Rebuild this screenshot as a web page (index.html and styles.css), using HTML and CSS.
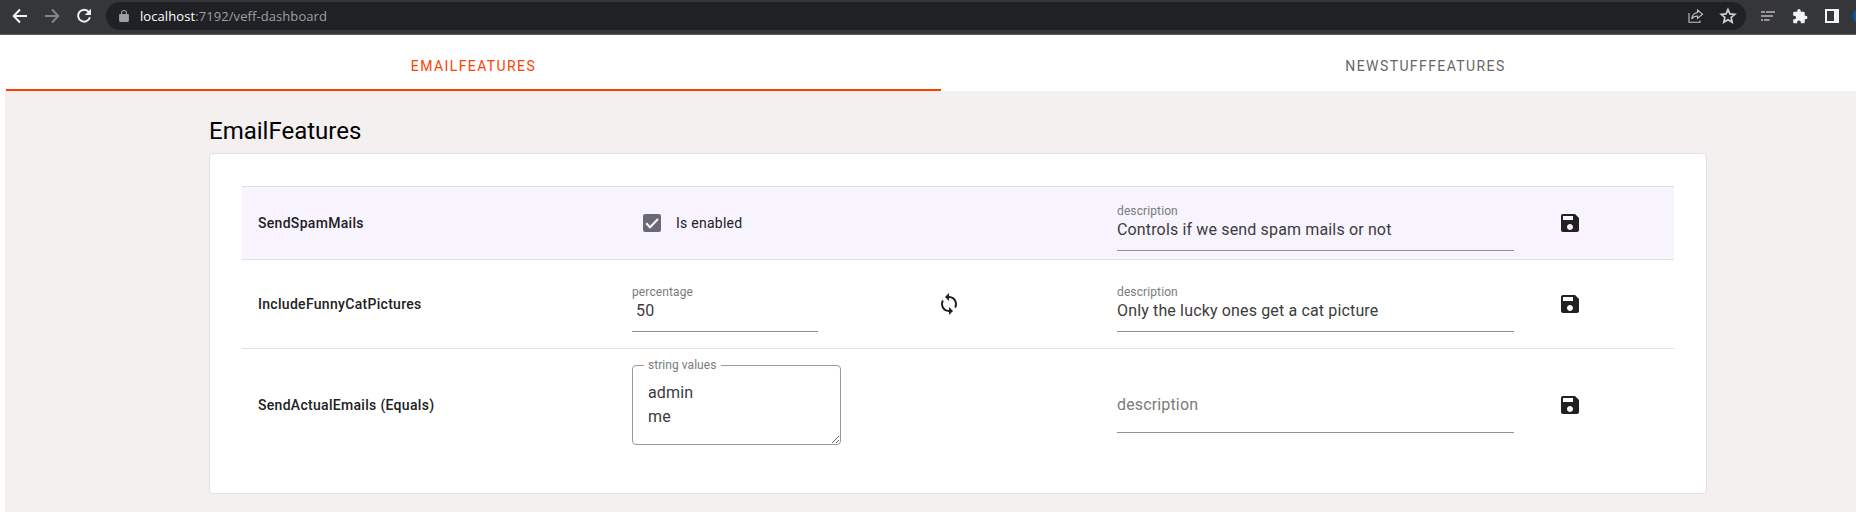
FILE: index.html
```html
<!DOCTYPE html>
<html lang="en">
<head>
<meta charset="utf-8">
<title>veff dashboard</title>
<link rel="stylesheet" href="styles.css">
</head>
<body>
<svg class="defs" aria-hidden="true">
  <symbol id="save" viewBox="0 0 24 24"><path d="M17 3H5c-1.11 0-2 .9-2 2v14c0 1.1.89 2 2 2h14c1.1 0 2-.9 2-2V7l-4-4zm-5 16c-1.66 0-3-1.34-3-3s1.34-3 3-3 3 1.34 3 3-1.34 3-3 3zm3-10H5V5h10v4z"/></symbol>
  <symbol id="sync" viewBox="0 0 24 24"><path d="M12 4V1L8 5l4 4V6c3.31 0 6 2.69 6 6 0 1.01-.25 1.97-.7 2.8l1.46 1.46C19.54 15.03 20 13.57 20 12c0-4.42-3.58-8-8-8zm0 14c-3.31 0-6-2.69-6-6 0-1.01.25-1.97.7-2.8L5.24 7.74C4.46 8.97 4 10.43 4 12c0 4.42 3.58 8 8 8v3l4-4-4-4v3z"/></symbol>
</svg>

<header class="browser">
  <div class="nav">
    <svg class="ico" viewBox="0 0 16 16"><path d="M15 8H2M8 1.5 1.7 8 8 14.5"/></svg>
    <svg class="ico dim" viewBox="0 0 16 16"><path d="M1 8h13M8 1.5 14.3 8 8 14.5"/></svg>
    <svg class="ico" viewBox="0 0 16 16"><path d="M12.8 3.9A6 6 0 1 0 13.9 9.3"/><path class="solid" d="M15 .8V7H8.8z"/></svg>
  </div>
  <div class="address">
    <svg class="lock" viewBox="0 0 10 12"><path d="M8.8 4H8V3a3 3 0 0 0-6 0v1h-.8C.6 4 .1 4.500.1 5.100v5.700c0 .6.5 1.100 1.100 1.100h7.600c.6 0 1.100-.5 1.100-1.100V5.100C9.900 4.500 9.400 4 8.800 4zM6.900 4H3.100V3a1.900 1.900 0 0 1 3.800 0z"/></svg>
    <span class="url"><span class="host">localhost</span>:7192/veff-dashboard</span>
    <svg class="share" viewBox="0 0 16 14"><path d="M1 4v9.300h11V11.500"/><path d="M9.500 3.500V1L14.500 5.200l-5 4.200V7C7 7 5 8 3.700 10 4 6.500 6 4 9.500 3.500z"/></svg>
    <svg class="star" viewBox="0 0 16 16"><path d="M8 2.200 9.700 6.100l4.300.4-3.200 2.800.9 4.200L8 11.300l-3.700 2.200.9-4.200L2 6.500l4.300-.4z"/></svg>
  </div>
  <div class="tools">
    <svg class="list" viewBox="0 0 14 12"><path d="M0 2h4M5 2h9M0 6h12M0 10h2M3 10h5.500"/></svg>
    <svg class="puzzle" viewBox="1 1 22 22"><path d="M20.500 11H19V7c0-1.100-.9-2-2-2h-4V3.500a2.500 2.500 0 0 0-5 0V5H4c-1.100 0-1.990.9-1.990 2v3.800H3.500c1.490 0 2.700 1.210 2.700 2.700s-1.210 2.700-2.700 2.700H2V20c0 1.100.9 2 2 2h3.800v-1.500c0-1.490 1.210-2.700 2.700-2.700s2.700 1.210 2.700 2.700V22H17c1.100 0 2-.9 2-2v-4h1.500a2.500 2.500 0 0 0 0-5z"/></svg>
    <span class="panel-icon"></span>
    <span class="avatar"></span>
  </div>
</header>

<nav class="tabs">
  <a class="tab active">EMAILFEATURES</a>
  <a class="tab second">NEWSTUFFFEATURES</a>
</nav>

<main class="page">
  <h1 class="title">EmailFeatures</h1>
  <section class="card">
    <div class="row hovered">
      <div class="name">SendSpamMails</div>
      <div class="cell">
        <label class="check">
          <svg class="box" viewBox="0 0 18 18"><path d="M3.200 9.300 7 13.200 15 5"/></svg>
          <span>Is enabled</span>
        </label>
      </div>
      <div class="cell"></div>
      <div class="cell"><div class="field"><span class="label">description</span><span class="value">Controls if we send spam mails or not</span></div></div>
      <div class="cell"><span class="button"><svg class="mi"><use href="#save"/></svg></span></div>
    </div>
    <div class="row">
      <div class="name">IncludeFunnyCatPictures</div>
      <div class="cell"><div class="field narrow"><span class="label">percentage</span><span class="value number">50</span></div></div>
      <div class="cell"><span class="button"><svg class="mi"><use href="#sync"/></svg></span></div>
      <div class="cell"><div class="field"><span class="label">description</span><span class="value">Only the lucky ones get a cat picture</span></div></div>
      <div class="cell"><span class="button"><svg class="mi"><use href="#save"/></svg></span></div>
    </div>
    <div class="row">
      <div class="name">SendActualEmails (Equals)</div>
      <div class="cell">
        <div class="outlined"><span class="notch">string values</span><textarea class="area">admin
me</textarea></div>
      </div>
      <div class="cell"></div>
      <div class="cell"><div class="field"><span class="placeholder">description</span></div></div>
      <div class="cell"><span class="button"><svg class="mi"><use href="#save"/></svg></span></div>
    </div>
  </section>
</main>
</body>
</html>
```
FILE: styles.css
```css
* { box-sizing: border-box; }
body {
  margin: 0;
  height: 512px;
  overflow: hidden;
  background: #fff;
  font-family: Roboto, sans-serif;
  color: #212121;
}
.defs { display: none; }

/* Browser toolbar */
.browser {
  display: flex;
  height: 35px;
  padding-top: 2px;
  background: #35363a;
  border-bottom: 1px solid #5c5d60;
  overflow: hidden;
}
.nav { display: flex; flex: none; gap: 16px; width: 106px; padding: 6px 0 0 12px; }
.ico { width: 16px; height: 16px; fill: none; stroke: #f1f3f4; stroke-width: 2; flex: none; }
.ico.dim { stroke: #85868a; }
.solid { fill: #f1f3f4; stroke: none; }
.address {
  display: flex;
  align-items: center;
  width: 1640px;
  height: 28px;
  padding: 0 9px 0 13px;
  border-radius: 14px;
  background: #202124;
  flex: none;
}
.lock { width: 10px; height: 12px; fill: #9aa0a6; }
.url {
  margin-left: 11px;
  font: 13px/28px "Open Sans", sans-serif;
  letter-spacing: .08px;
  color: #9aa0a6;
}
.host { color: #fff; }
.share { width: 16px; height: 14px; margin-left: auto; fill: none; stroke: #c4c7c9; stroke-width: 1.1; }
.star { width: 18px; height: 18px; margin-left: 15px; fill: none; stroke: #d0d2d4; stroke-width: 1.5; }
.tools { display: flex; padding: 7px 0 0 15px; flex: none; }
.list { width: 14px; height: 12px; margin-top: 1px; fill: none; stroke: #9c9698; stroke-width: 1.8; }
.puzzle { width: 16px; height: 15px; margin-left: 17px; fill: #f1f3f4; }
.panel-icon {
  width: 14px;
  height: 14px;
  margin-left: 17px;
  border: 2px solid #f1f3f4;
  border-right-width: 5px;
}
.avatar { width: 18px; height: 18px; margin: -2px 0 0 14px; border-radius: 50%; background: #0b57a4; }

/* Feature group tabs */
.tabs { display: flex; height: 56px; padding-left: 6px; }
.tab {
  flex: none;
  width: 935px;
  padding-top: 7px;
  font-size: 14px;
  font-weight: 400;
  line-height: 48px;
  letter-spacing: 1.4px;
  text-align: center;
  color: #666;
}
.tab.active { color: #ff3e00; border-bottom: 2px solid #ff3e00; }
.tab.second { width: 969px; }

/* Page content */
.page {
  height: 421px;
  margin-left: 5px;
  padding: 24px 0 0 204px;
  background: #f4f0f0;
}
.title {
  margin: 0;
  height: 38px;
  font-size: 24px;
  font-weight: 400;
  line-height: 32px;
  color: #000;
}
.card {
  width: 1498px;
  padding: 32px;
  border: 1px solid #e0e0e0;
  border-radius: 4px;
  background: #fff;
}
.row {
  display: grid;
  grid-template-columns: 374px 293px 192px 429px 144px;
  align-items: center;
  height: 89px;
  border-top: 1px solid #e0e0e0;
}
.row.hovered { height: 73px; background: #f7f4ff; }
.row:last-child { height: 113px; }
.cell, .name { padding: 0 16px; }
.name {
  font-size: 14px;
  font-weight: 500;
  line-height: 20px;
  letter-spacing: .3px;
  padding-bottom: 1px;
}
.check { display: flex; align-items: center; padding-left: 11px; font-size: 14px; line-height: 20px; letter-spacing: .25px; }
.check span { padding-bottom: 1px; }
.box { width: 18px; height: 18px; margin-right: 15px; border-radius: 2px; background: #6b6878; fill: none; stroke: #fff; stroke-width: 2; }
.field {
  display: flex;
  flex-direction: column;
  height: 56px;
  padding-top: 8px;
  border-bottom: 1px solid #919191;
}
.narrow { width: 186px; }
.label { font-size: 12px; line-height: 16px; letter-spacing: .11px; color: #7b7b7b; }
.value { font-size: 16px; line-height: 22px; letter-spacing: .15px; color: #3c3c3c; }
.number { padding-left: 4px; }
.placeholder { padding-top: 8px; font-size: 16px; line-height: 24px; letter-spacing: .15px; color: #7b7b7b; }
.button { display: flex; align-items: center; justify-content: center; width: 48px; height: 48px; }
.mi { width: 24px; height: 24px; fill: #212121; }
.outlined {
  position: relative;
  width: 209px;
  height: 80px;
  border: 1px solid #9a9a9a;
  border-radius: 4px;
}
.notch {
  position: absolute;
  top: -9px;
  left: 11px;
  width: 77px;
  padding-left: 4px;
  background: #fff;
  font-size: 12px;
  line-height: 16px;
  letter-spacing: .05px;
  color: #7b7b7b;
}
.area {
  display: block;
  width: 100%;
  height: 100%;
  padding: 15px;
  border: 0;
  outline: 0;
  background: transparent;
  font: 16px/24px Roboto, sans-serif;
  letter-spacing: .15px;
  color: #3c3c3c;
  overflow: hidden;
  resize: both;
}
```
